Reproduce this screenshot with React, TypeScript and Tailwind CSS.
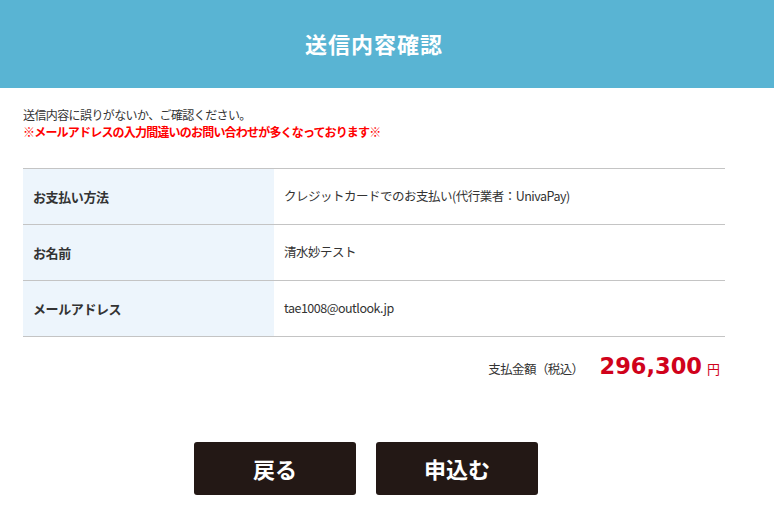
const rows = [
  { label: "お支払い方法", value: "クレジットカードでのお支払い(代行業者：UnivaPay)" },
  { label: "お名前", value: "清水妙テスト" },
  { label: "メールアドレス", value: "tae1008@outlook.jp" },
];

export default function App() {
  return (
    <div className="w-[774px] h-[519px] bg-white text-[#333] overflow-hidden" style={{ fontFamily: '"Noto Sans CJK JP", "Noto Sans", sans-serif' }}>
      {/* Header */}
      <div className="h-[88px] bg-[#59b4d3] flex items-center">
        <div className="w-[702px] ml-[23px] text-center text-white text-[22px] font-bold tracking-[1px] -mt-[2px]">送信内容確認</div>
      </div>

      <div className="w-[702px] ml-[23px]">
        <div className="mt-[18px] text-[12px] leading-[17px] tracking-[-0.6px]">
          <p>送信内容に誤りがないか、ご確認ください。</p>
          <p className="text-[#ff0000] font-bold tracking-[-0.8px]">※メールアドレスの入力間違いのお問い合わせが多くなっております※</p>
        </div>

        {/* Table */}
        <table className="w-full mt-[28px] border-t border-[#c4c4c4] border-collapse">
          <tbody>
            {rows.map((r) => (
              <tr key={r.label} className="border-b border-[#c4c4c4] h-[56px]">
                <th className="w-[251px] bg-[#edf5fc] text-left pl-[10px] text-[13px] font-bold tracking-[-0.4px]">{r.label}</th>
                <td className="pl-[10px] text-[12.5px] tracking-[-0.5px]">{r.value}</td>
              </tr>
            ))}
          </tbody>
        </table>

        {/* Total */}
        <div className="flex items-baseline justify-end pr-[5px] mt-[13px]">
          <span className="text-[12.5px] tracking-[-0.6px]">支払金額（税込）</span>
          <span className="ml-[16px] text-[#d0021b] text-[22.5px] font-bold" style={{ fontFamily: '"DejaVu Sans", sans-serif' }}>296,300</span>
          <span className="ml-[5px] text-[13px] text-[#d0021b]">円</span>
        </div>
      </div>

      {/* Buttons */}
      <div className="flex justify-center gap-[20px] mt-[58px] pr-[42px]">
        <button className="w-[162px] h-[53px] bg-[#231815] rounded-[3px] text-white text-[22px] font-bold">戻る</button>
        <button className="w-[162px] h-[53px] bg-[#231815] rounded-[3px] text-white text-[22px] font-bold">申込む</button>
      </div>
    </div>
  );
}
